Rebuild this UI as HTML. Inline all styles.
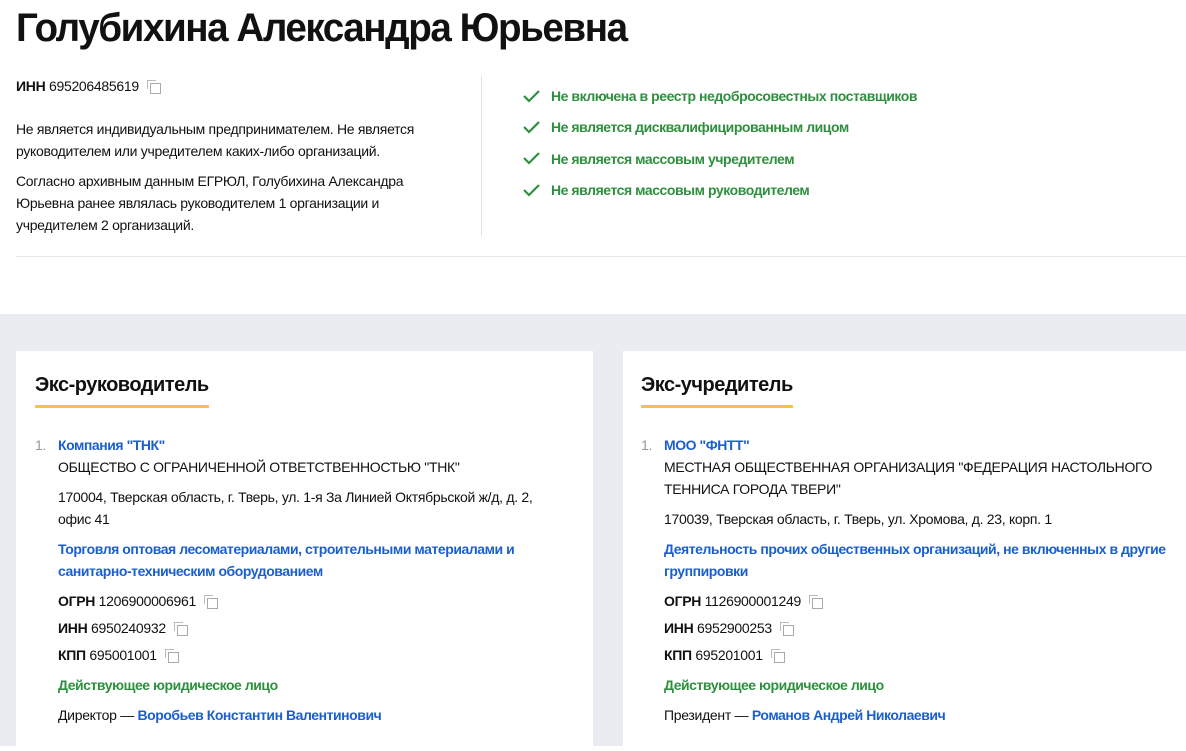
<!DOCTYPE html>
<html><head><meta charset="utf-8"><style>
*{margin:0;padding:0;box-sizing:border-box}
body{width:1186px;height:746px;overflow:hidden;background:#fff;font-family:"Liberation Sans",sans-serif;color:#111;font-size:14px;letter-spacing:-0.3px;position:relative}
.a{position:absolute;white-space:nowrap}
h1{position:absolute;left:16px;top:6px;font-size:40px;font-weight:bold;letter-spacing:-1.5px;transform:scaleX(0.965);transform-origin:left;white-space:nowrap;color:#111}
.cp{display:inline-block;width:12px;height:12px;position:relative;vertical-align:-1px;margin-left:8px}
.cp:before{content:"";position:absolute;left:0;top:0;width:8px;height:8px;border-top:1px solid #bbb;border-left:1px solid #bbb}
.cp:after{content:"";position:absolute;left:3px;top:3px;width:9px;height:9px;border:1px solid #aaa;background:#fff}
.g{color:#2e8f3e;font-weight:bold;letter-spacing:-0.45px}
.bl{color:#1a5fcc;font-weight:bold;letter-spacing:-0.45px}
b{font-weight:bold}
.band{position:absolute;left:0;top:314px;width:1186px;height:432px;background:#e9edf1}
.card{position:absolute;top:351px;height:400px;background:#fff}
.h2{position:absolute;top:374px;font-size:20px;font-weight:bold;letter-spacing:-0.5px;padding-bottom:8px;border-bottom:3px solid #f6c343}
.num{color:#999}
</style></head><body>
<h1>Голубихина Александра Юрьевна</h1>
<div class="a" style="left:16px;top:78px"><b>ИНН</b> 695206485619<span class="cp"></span></div>
<div class="a" style="left:16px;top:118px;line-height:22px">Не является индивидуальным предпринимателем. Не является<br>руководителем или учредителем каких-либо организаций.</div>
<div class="a" style="left:16px;top:170px;line-height:22px">Согласно архивным данным ЕГРЮЛ, Голубихина Александра<br>Юрьевна ранее являлась руководителем 1 организации и<br>учредителем 2 организаций.</div>
<div style="position:absolute;left:481px;top:76px;width:1px;height:160px;background:#e2e2e2"></div>
<div style="position:absolute;left:16px;top:256px;width:1170px;height:1px;background:#e6e6e6"></div>
<svg style="position:absolute;left:522px;top:88px" width="20" height="110" viewBox="0 0 20 110" fill="none" stroke="#2e8f3e" stroke-width="2.2">
<path d="M2 8l5 5 10-10"/><path d="M2 39l5 5 10-10"/><path d="M2 70l5 5 10-10"/><path d="M2 102l5 5 10-10"/></svg>
<div class="a g" style="left:551px;top:88px">Не включена в реестр недобросовестных поставщиков</div>
<div class="a g" style="left:551px;top:119px">Не является дисквалифицированным лицом</div>
<div class="a g" style="left:551px;top:151px">Не является массовым учредителем</div>
<div class="a g" style="left:551px;top:182px">Не является массовым руководителем</div>
<div class="band"></div>
<div class="card" style="left:16px;width:577px"></div>
<div class="card" style="left:623px;width:570px"></div>
<div class="h2" style="left:35px">Экс-руководитель</div>
<div class="h2" style="left:641px">Экс-учредитель</div>
<div class="a" style="left:35px;top:434px;line-height:22px">
<span class="num">1.</span>
<div style="position:absolute;left:23px;top:0">
<div class="bl">Компания "ТНК"</div>
<div>ОБЩЕСТВО С ОГРАНИЧЕННОЙ ОТВЕТСТВЕННОСТЬЮ "ТНК"</div>
<div style="margin-top:8px">170004, Тверская область, г. Тверь, ул. 1-я За Линией Октябрьской ж/д, д. 2,<br>офис 41</div>
<div class="bl" style="margin-top:8px">Торговля оптовая лесоматериалами, строительными материалами и<br>санитарно-техническим оборудованием</div>
<div style="margin-top:8px"><b>ОГРН</b> 1206900006961<span class="cp"></span></div>
<div style="margin-top:5px"><b>ИНН</b> 6950240932<span class="cp"></span></div>
<div style="margin-top:5px"><b>КПП</b> 695001001<span class="cp"></span></div>
<div class="g" style="margin-top:8px">Действующее юридическое лицо</div>
<div style="margin-top:8px">Директор — <span class="bl">Воробьев Константин Валентинович</span></div>
</div></div>
<div class="a" style="left:641px;top:434px;line-height:22px">
<span class="num">1.</span>
<div style="position:absolute;left:23px;top:0">
<div class="bl">МОО "ФНТТ"</div>
<div>МЕСТНАЯ ОБЩЕСТВЕННАЯ ОРГАНИЗАЦИЯ "ФЕДЕРАЦИЯ НАСТОЛЬНОГО<br>ТЕННИСА ГОРОДА ТВЕРИ"</div>
<div style="margin-top:8px">170039, Тверская область, г. Тверь, ул. Хромова, д. 23, корп. 1</div>
<div class="bl" style="margin-top:8px">Деятельность прочих общественных организаций, не включенных в другие<br>группировки</div>
<div style="margin-top:8px"><b>ОГРН</b> 1126900001249<span class="cp"></span></div>
<div style="margin-top:5px"><b>ИНН</b> 6952900253<span class="cp"></span></div>
<div style="margin-top:5px"><b>КПП</b> 695201001<span class="cp"></span></div>
<div class="g" style="margin-top:8px">Действующее юридическое лицо</div>
<div style="margin-top:8px">Президент — <span class="bl">Романов Андрей Николаевич</span></div>
</div></div>
</body></html>
